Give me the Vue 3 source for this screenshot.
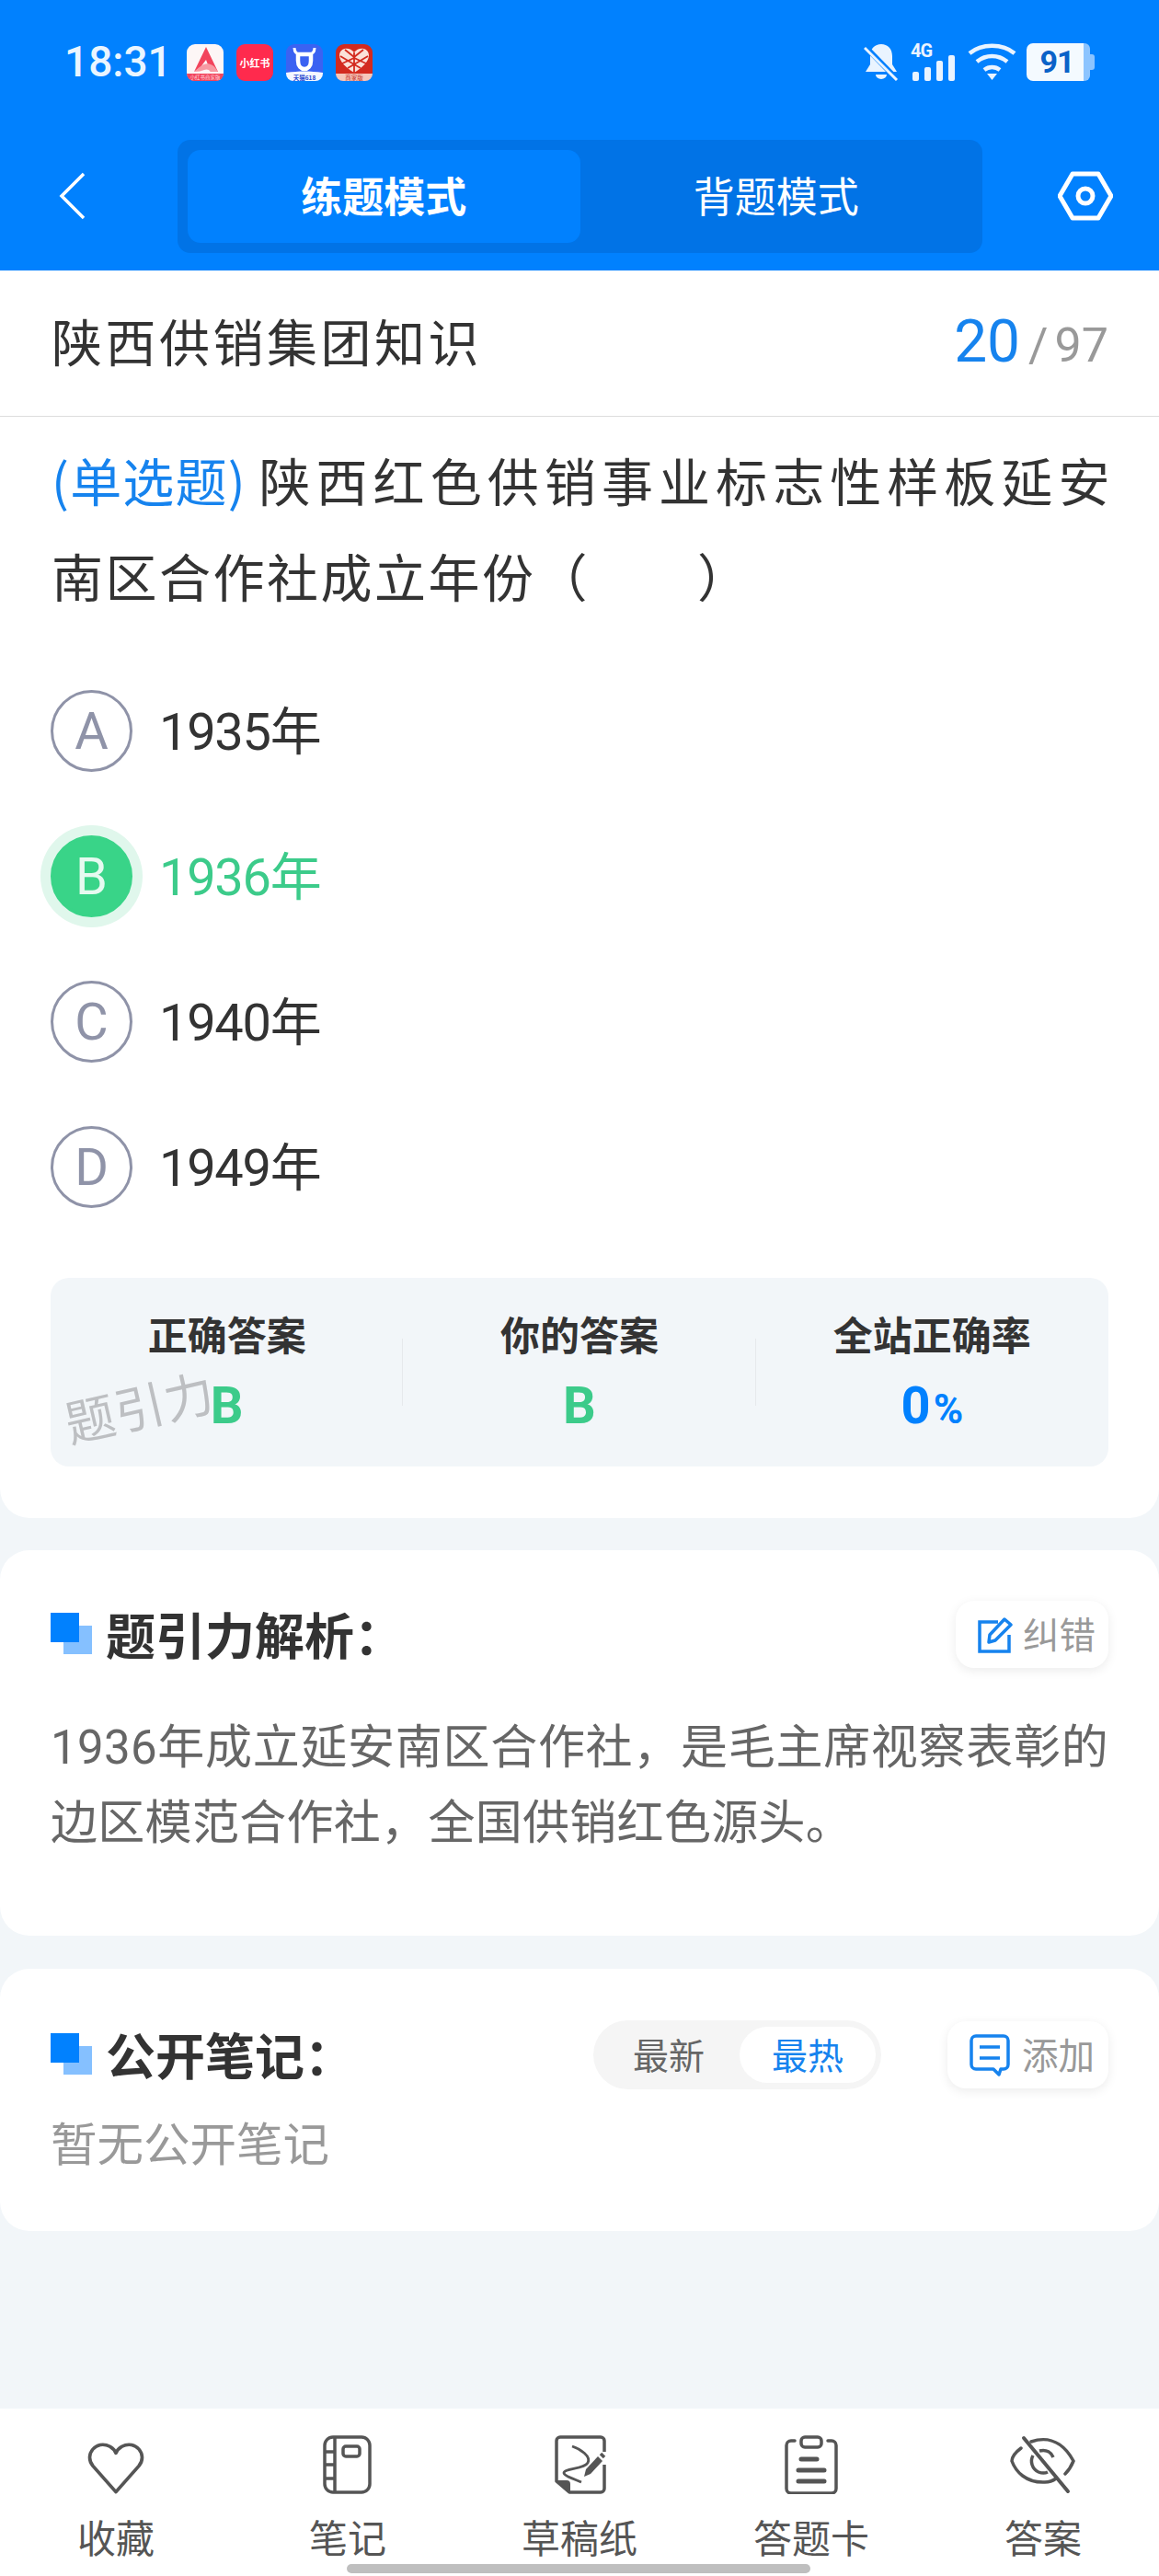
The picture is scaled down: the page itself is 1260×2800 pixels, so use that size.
<script setup>
const options = [
  { key: 'A', text: '1935年' },
  { key: 'B', text: '1936年', picked: true },
  { key: 'C', text: '1940年' },
  { key: 'D', text: '1949年' },
]
</script>

<template>
  <div class="page">
    <header class="top">
      <div class="status">
        <span class="time">18:31</span>
        <div class="apps">
          <svg class="app" viewBox="0 0 40 40">
            <rect width="40" height="40" rx="9" fill="#fdf6f6"/>
            <path d="M0 32h40v0a8 8 0 0 1-8 8H8a8 8 0 0 1-8-8z" fill="#f2445c"/>
            <path d="M21 3l13 27h-8l-5-13-6 8-7 5z" fill="#f2445c"/>
            <path d="M8 30c6-5 12-12 20-7 2 1 4 4 6 7h-8c-2-3-5-3-7-2-3 1-6 2-11 2z" fill="#f79aa3"/>
            <text x="20" y="38" text-anchor="middle" font-size="5.500" fill="#ffd9dd" font-family="Noto Sans CJK SC">小红书商家版</text>
          </svg>
          <div class="app app-red"><span>小红书</span></div>
          <svg class="app" viewBox="0 0 40 40">
            <rect width="40" height="40" rx="9" fill="#3b62f2"/>
            <path d="M0 31c14-2 26-2 40 0v1a8 8 0 0 1-8 8H8a8 8 0 0 1-8-8z" fill="#f4f7ff"/>
            <path d="M13 11v7c0 12 14 12 14 0v-7z" fill="none" stroke="#fff" stroke-width="4.500" stroke-linejoin="round"/>
            <path d="M9 4c0 5 3 7 7 7h8c4 0 7-2 7-7" fill="none" stroke="#fff" stroke-width="3"/>
            <text x="20" y="38.500" text-anchor="middle" font-size="6.500" font-weight="700" fill="#2c4bd0" font-family="Noto Sans CJK SC">天猫618</text>
          </svg>
          <svg class="app" viewBox="0 0 40 40">
            <rect width="40" height="40" rx="9" fill="#d32a1f"/>
            <path d="M0 32h40a8 8 0 0 1-8 8H8a8 8 0 0 1-8-8z" fill="#f6c6ba"/>
            <path d="M20 31C9 24 4 18 4 12 4 4 15 2 20 9c5-7 16-5 16 3 0 6-5 12-16 19z" fill="#fbe1d9"/>
            <path d="M20 9v22M10 6l10 8 10-8M5 13l15 9 15-9M7 21l13-6 13 6M13 26l7-4 7 4" stroke="#d32a1f" stroke-width="1.800" fill="none"/>
            <text x="20" y="38.500" text-anchor="middle" font-size="6.500" fill="#c22d24" font-family="Noto Sans CJK SC">商家版</text>
          </svg>
        </div>
        <div class="sys">
          <svg class="bell" viewBox="0 0 38 41">
            <path d="M19 1c7 0 12 5 12 13v9l5 8H2l5-8v-9C7 6 12 1 19 1z" fill="#eaf4ff"/>
            <path d="M13 34h12a6 5 0 0 1-12 0z" fill="#eaf4ff"/>
            <path d="M1 3l35 36" stroke="#0181fe" stroke-width="6"/>
            <path d="M1 5l35 35" stroke="#eaf4ff" stroke-width="3"/>
          </svg>
          <div class="signal">
            <span class="g4">4G</span>
            <div class="bars"><i class="b1"></i><i class="b2"></i><i class="b3"></i><i class="b4"></i></div>
          </div>
          <svg class="wifi" viewBox="0 0 53 41">
            <path d="M2 11C15 0 38 0 51 11" fill="none" stroke="#eaf4ff" stroke-width="4.500"/>
            <path d="M10 20c10-8 23-8 33 0" fill="none" stroke="#eaf4ff" stroke-width="4.500"/>
            <path d="M18 29c5-4 12-4 17 0" fill="none" stroke="#eaf4ff" stroke-width="4.500"/>
            <path d="M21 33h11l-5.500 7z" fill="#eaf4ff"/>
          </svg>
          <div class="batt"><span class="lvl">91</span><span class="cap"></span></div>
        </div>
      </div>
      <div class="nav">
        <svg class="back" viewBox="0 0 28 52"><path d="M27 2L3 26l24 24" fill="none" stroke="#fff" stroke-width="3.500"/></svg>
        <div class="mode">
          <div class="mode-tab on">练题模式</div>
          <div class="mode-tab">背题模式</div>
        </div>
        <svg class="gear" viewBox="0 0 60 54">
          <path d="M16 3h28l14 24-14 24H16L2 27z" fill="none" stroke="#fff" stroke-width="5" stroke-linejoin="round"/>
          <circle cx="30" cy="27" r="8" fill="none" stroke="#fff" stroke-width="5"/>
        </svg>
      </div>
    </header>

    <section class="card first">
      <div class="title-row">
        <span class="title">陕西供销集团知识</span>
        <span class="count"><b>20</b><em>/</em><i>97</i></span>
      </div>
      <p class="question"><span class="qtype">(单选题)</span> 陕西红色供销事业标志性样板延安南区合作社成立年份（　　）</p>
      <div class="options">
        <div v-for="o in options" :key="o.key" class="opt" :class="{ picked: o.picked }">
          <span class="dot">{{ o.key }}</span>
          <span class="opt-text">{{ o.text }}</span>
        </div>
      </div>
      <div class="stats">
        <div class="stat"><div class="s-label">正确答案</div><div class="s-val green">B</div></div>
        <div class="stat"><div class="s-label">你的答案</div><div class="s-val green">B</div></div>
        <div class="stat"><div class="s-label">全站正确率</div><div class="s-val blue">0<small>%</small></div></div>
        <span class="mark">题引力</span>
      </div>
    </section>

    <section class="card second">
      <div class="head">
        <span class="sq"></span>
        <h2>题引力解析：</h2>
        <div class="pill-btn">
          <svg class="btn-ic" viewBox="0 0 38 40">
            <path d="M22 6H2v32h32V20" fill="none" stroke="#1683ee" stroke-width="3.500"/>
            <path d="M12 28l1-8L29 3l7 6-17 17z" fill="none" stroke="#1683ee" stroke-width="3.500" stroke-linejoin="round"/>
          </svg>
          <span>纠错</span>
        </div>
      </div>
      <p class="analysis">1936年成立延安南区合作社，是毛主席视察表彰的边区模范合作社，全国供销红色源头。</p>
    </section>

    <section class="card third">
      <div class="head">
        <span class="sq"></span>
        <h2>公开笔记：</h2>
        <div class="toggle">
          <span class="tg">最新</span>
          <span class="tg on">最热</span>
        </div>
        <div class="pill-btn add">
          <svg class="btn-ic wide" viewBox="0 0 44 46">
            <path d="M7 2h30a5 5 0 0 1 5 5v26a5 5 0 0 1-5 5h-3l-2 6-6-6H7a5 5 0 0 1-5-5V7a5 5 0 0 1 5-5z" fill="none" stroke="#1683ee" stroke-width="3.500" stroke-linejoin="round"/>
            <path d="M11 14h22M11 26h22" stroke="#1683ee" stroke-width="3.500"/>
          </svg>
          <span>添加</span>
        </div>
      </div>
      <p class="none">暂无公开笔记</p>
    </section>

    <nav class="bottom">
      <div class="tab">
        <svg class="tab-ic" viewBox="0 0 80 64">
          <path d="M40 62L13 30C2 16 17-3 33 6c3 2 6 5 7 8 1-3 4-6 7-8 16-9 31 10 20 24z" transform="translate(3 7) scale(.925 .88)" fill="none" stroke="#555" stroke-width="4" stroke-linejoin="round"/>
        </svg>
        <span>收藏</span>
      </div>
      <div class="tab">
        <svg class="tab-ic" viewBox="0 0 80 64">
          <rect x="15" y="2" width="49" height="60" rx="9" fill="none" stroke="#555" stroke-width="3.500"/>
          <path d="M26 2v60M15 18h11M15 32h11M15 47h11" stroke="#555" stroke-width="3.500"/>
          <rect x="35" y="12" width="18" height="11" rx="3" fill="none" stroke="#555" stroke-width="3.500"/>
        </svg>
        <span>笔记</span>
      </div>
      <div class="tab">
        <svg class="tab-ic" viewBox="0 0 80 64">
          <path d="M67 18V6a4 4 0 0 0-4-4H19a4 4 0 0 0-4 4v44l14 12h34a4 4 0 0 0 4-4V32" fill="none" stroke="#555" stroke-width="3.500" stroke-linejoin="round"/>
          <path d="M15 49h11a4 4 0 0 1 4 4v9z" fill="#555"/>
          <path d="M32 12c9 3 21 11 17 18-4 7-26 6-26 11 0 3 12 7 19 10" fill="none" stroke="#555" stroke-width="2.800"/>
          <path d="M45 45l2-8 13-14 5 5-13 14z" fill="#555"/>
          <path d="M63 20l4 4" stroke="#555" stroke-width="3.500"/>
        </svg>
        <span>草稿纸</span>
      </div>
      <div class="tab">
        <svg class="tab-ic" viewBox="0 0 80 64">
          <path d="M22 6h-4a5 5 0 0 0-5 5v47a5 5 0 0 0 5 5h44a5 5 0 0 0 5-5V11a5 5 0 0 0-5-5h-4" fill="none" stroke="#555" stroke-width="3.500" stroke-linecap="round"/>
          <rect x="29" y="2" width="22" height="11" rx="4" fill="none" stroke="#555" stroke-width="3.500"/>
          <path d="M29 26h17M26 38h28M26 50h28" stroke="#555" stroke-width="5" stroke-linecap="round"/>
        </svg>
        <span>答题卡</span>
      </div>
      <div class="tab">
        <svg class="tab-ic" viewBox="0 0 80 64">
          <path d="M16 14C8 20 6 25 6 28c4 11 15 24 36 23 4 0 8-1 12-4M27 7c26-9 40 10 46 21-2 5-5 10-9 14" fill="none" stroke="#555" stroke-width="3.500" stroke-linecap="round"/>
          <path d="M29 22a13 13 0 0 0 6 18c5 2 8 1 10 0M36 17c8-2 13 2 15 7" fill="none" stroke="#555" stroke-width="3.500"/>
          <path d="M19 3l48 58" stroke="#555" stroke-width="4" stroke-linecap="round"/>
        </svg>
        <span>答案</span>
      </div>
      <span class="home"></span>
    </nav>
  </div>
</template>

<style scoped>
.page {
  width: 1260px;
  height: 2800px;
  background: #f2f6f9;
  display: flex;
  flex-direction: column;
  font-family: "Roboto", "Noto Sans CJK SC", sans-serif;
  color: #333;
  overflow: hidden;
}
.top { height: 294px; background: #0181fe; flex: none; }
.status { height: 41px; padding: 47px 70px 0 70px; display: flex; align-items: center; }
.time { font-size: 46px; font-weight: 500; line-height: 41px; color: #eaf5ff; width: 133px; }
.apps { display: flex; gap: 14px; }
.app { width: 40px; height: 40px; display: block; }
.app-red {
  background: #ff2a4d;
  border-radius: 9px;
  color: #fff;
  font: 700 11px "Noto Sans CJK SC", sans-serif;
  display: flex;
  align-items: center;
  justify-content: center;
  white-space: nowrap;
}
.sys { margin-left: auto; display: flex; align-items: center; width: 251px; }
.bell { width: 38px; height: 41px; }
.signal { margin-left: 13px; width: 50px; height: 41px; position: relative; }
.g4 { position: absolute; left: 0; top: -2px; font: 700 20px/20px "Roboto", sans-serif; letter-spacing: -1px; color: #eaf4ff; }
.bars { position: absolute; left: 2px; bottom: 0; display: flex; gap: 6px; align-items: flex-end; }
.bars i { width: 7px; background: #eaf4ff; border-radius: 2px; display: block; }
.b1 { height: 10px; } .b2 { height: 15px; } .b3 { height: 22px; } .b4 { height: 28px; }
.wifi { margin-left: 12px; width: 53px; height: 41px; }
.batt {
  margin-left: 11px;
  width: 62px;
  height: 41px;
  background: #f4faff;
  border-radius: 7px 0 0 7px;
  position: relative;
  display: flex;
  align-items: center;
  justify-content: center;
  box-sizing: border-box;
  padding-left: 4px;
}
.lvl { font: 700 34px/41px "Roboto", sans-serif; letter-spacing: -1px; color: #0a62c8; }
.cap { position: absolute; left: 62px; top: 0; width: 7px; height: 41px; background: #8cc4ff; border-radius: 0 6px 6px 0; }
.cap::after {
  content: "";
  position: absolute;
  left: 7px;
  top: 12px;
  width: 5px;
  height: 17px;
  background: #8cc4ff;
  border-radius: 0 3px 3px 0;
}
.nav { margin-top: 64px; height: 123px; position: relative; display: flex; align-items: center; }
.back { width: 28px; height: 52px; margin: -2px 0 0 64px; flex: none; }
.mode {
  margin-left: 101px;
  width: 875px;
  height: 123px;
  box-sizing: border-box;
  padding: 11px;
  background: #0173e6;
  border-radius: 14px;
  display: flex;
  flex: none;
}
.mode-tab {
  width: 427px;
  text-align: center;
  font: 400 45px/98px "Noto Sans CJK SC", sans-serif;
  color: #fff;
}
.mode-tab.on { background: #0181fe; border-radius: 14px; font-weight: 700; }
.gear { width: 60px; height: 54px; margin: -2px 0 0 82px; flex: none; }

.card { background: #fff; border-radius: 32px; flex: none; }
.first { border-radius: 0 0 32px 32px; height: 1356px; }
.second { margin-top: 35px; height: 419px; box-sizing: border-box; padding: 55px 55px 0; }
.third { margin-top: 36px; height: 285px; box-sizing: border-box; padding: 56px 55px 0; }

.title-row {
  height: 159px;
  box-sizing: border-box;
  border-bottom: 1px solid #dcdcdc;
  padding: 0 55px 0 56px;
  display: flex;
  align-items: center;
  justify-content: space-between;
}
.title { font: 400 55px/1 "Noto Sans CJK SC", sans-serif; letter-spacing: 3.500px; margin-top: -7px; }
.count { display: flex; align-items: baseline; font-family: "Roboto", sans-serif; margin-top: -4px; }
.count b { font-weight: 400; font-size: 64px; color: #1683ee; }
.count em { font-style: normal; font-size: 52px; color: #999; margin: 0 7px 0 9px; }
.count i { font-style: normal; font-size: 52px; color: #999; }

.question {
  margin: 16px 0 0;
  padding: 0 51px 0 56px;
  font: 400 56px/104px "Noto Sans CJK SC", sans-serif;
  letter-spacing: 2.500px;
  text-align: justify;
  height: 208px;
}
.qtype { color: #1683ee; display: inline-block; letter-spacing: 1.200px; margin-right: -5px; }

.options { margin-top: 38px; padding: 0 55px; }
.opt { height: 158px; display: flex; align-items: center; }
.dot {
  width: 89px;
  height: 89px;
  box-sizing: border-box;
  border: 3px solid #8f93a8;
  border-radius: 50%;
  color: #8f93a8;
  font: 400 56px/85px "Roboto", sans-serif;
  text-align: center;
  flex: none;
}
.opt-text { margin: 3px 0 0 29px; font: 400 56px/1 "Roboto", "Noto Sans CJK SC", sans-serif; letter-spacing: -1.300px; color: #333; }
.picked .dot { background: #39d488; border-color: #39d488; color: #e6faf0; box-shadow: 0 0 0 11px #e0f7ec; }
.picked .opt-text { color: #3ccb8a; }

.stats {
  margin: 42px 55px 0;
  height: 205px;
  background: #f2f6f9;
  border-radius: 20px;
  display: flex;
  position: relative;
}
.stat { flex: 1; text-align: center; position: relative; padding-top: 32px; }
.stat + .stat::before {
  content: "";
  position: absolute;
  left: -1px;
  top: 66px;
  height: 73px;
  width: 1px;
  background: #e6e9ec;
}
.s-label { font: 700 43px/56px "Noto Sans CJK SC", sans-serif; color: #333; }
.s-val { margin-top: 23px; font: 700 56px/56px "Roboto", sans-serif; }
.s-val small { font-size: 44px; margin-left: 3px; }
.green { color: #3ccb8a; }
.blue { color: #0181fe; }
.mark {
  position: absolute;
  left: 16px;
  top: 130px;
  font: 400 54px/1 "Noto Sans CJK SC", sans-serif;
  letter-spacing: 1px;
  color: #bdbfc2;
  transform: rotate(-13deg);
  transform-origin: left center;
}

.head { height: 73px; display: flex; align-items: center; position: relative; }
.third .head { height: 75px; }
.sq {
  width: 45px;
  height: 45px;
  flex: none;
  position: relative;
  margin-top: -2px;
}
.sq::before {
  content: "";
  position: absolute;
  right: 0;
  bottom: 0;
  width: 31px;
  height: 31px;
  background: #85c0ff;
}
.sq::after {
  content: "";
  position: absolute;
  left: 0;
  top: 0;
  width: 31px;
  height: 32px;
  background: #0181fe;
}
.head h2 {
  margin: -3px 0 0 15px;
  font: 700 54px/73px "Noto Sans CJK SC", sans-serif;
  color: #333;
}
.pill-btn {
  margin-left: auto;
  width: 166px;
  height: 73px;
  box-sizing: border-box;
  padding-left: 24px;
  border-radius: 20px;
  background: #fff;
  box-shadow: 0 3px 12px rgba(0, 0, 0, .08);
  display: flex;
  align-items: center;
  font: 400 39.500px/1 "Noto Sans CJK SC", sans-serif;
  color: #999;
  flex: none;
}
.pill-btn span { margin: -3px 0 0 -1px; }
.btn-ic { width: 38px; height: 40px; margin-right: 12px; flex: none; }
.btn-ic.wide { width: 44px; height: 46px; margin-right: 14px; }
.add { margin-left: 72px; width: 175px; }
.toggle {
  margin-left: auto;
  width: 313px;
  height: 75px;
  box-sizing: border-box;
  background: #f5f5f5;
  border-radius: 38px;
  display: flex;
  align-items: center;
  padding: 0 6px 0 8px;
  justify-content: space-between;
  flex: none;
}
.tg {
  width: 148px;
  height: 61px;
  text-align: center;
  font: 400 39px/58px "Noto Sans CJK SC", sans-serif;
  color: #666;
}
.tg.on { background: #fff; border-radius: 31px; color: #1683ee; }
.analysis {
  margin: 46px 0 0;
  font: 400 51px/82px "Roboto", "Noto Sans CJK SC", sans-serif;
  color: #666;
  letter-spacing: 0.300px;
  text-align: justify;
}
.none {
  margin: 15px 0 0;
  font: 400 50.500px/82px "Noto Sans CJK SC", sans-serif;
  color: #999;
}

.bottom {
  margin-top: auto;
  height: 182px;
  background: #fff;
  display: flex;
  position: relative;
  flex: none;
}
.tab {
  width: 252px;
  padding-top: 29px;
  text-align: center;
  color: #555;
  font: 400 42px/50px "Noto Sans CJK SC", sans-serif;
}
.tab span { display: block; margin-top: 21px; }
.tab-ic { width: 80px; height: 64px; display: block; margin: 0 auto; }
.home {
  position: absolute;
  left: 377px;
  top: 169px;
  width: 504px;
  height: 10px;
  border-radius: 5px;
  background: #bfbfbf;
}
</style>

<style>
html, body { margin: 0; padding: 0; background: #f2f6f9; }
</style>
